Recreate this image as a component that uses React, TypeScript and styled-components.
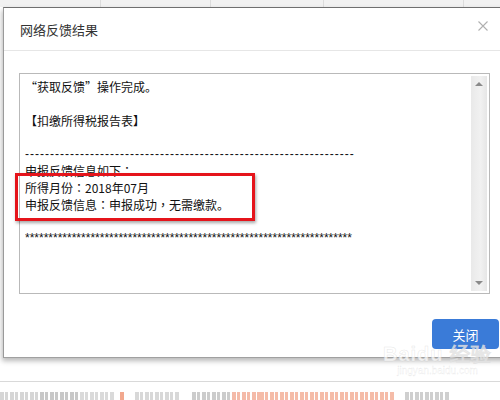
import React from "react";
import styled, { createGlobalStyle } from "styled-components";

const Global = createGlobalStyle`
  html, body { margin: 0; padding: 0; background: #fff; }
  body { width: 500px; height: 400px; overflow: hidden; font-family: "Noto Sans CJK SC", "Noto Sans", sans-serif; }
`;

const Page = styled.div`
  position: relative;
  width: 500px;
  height: 400px;
  overflow: hidden;
  display: flex;
  flex-direction: column;
`;

const TopStrip = styled.div`
  height: 7px;
  background: #f1f1f1;
  display: flex;
`;

const StripCell = styled.div<{ $w: number }>`
  width: ${(p) => p.$w}px;
  border-right: 1px solid #dcdcdc;
  box-sizing: border-box;
`;

const Dialog = styled.div`
  margin-left: 3px;
  width: 530px;
  height: 351px;
  box-sizing: border-box;
  background: #fff;
  border-top: 1px solid #6f6f6f;
  border-left: 1px solid #9a9a9a;
  border-bottom: 1px solid #a0a0a0;
  box-shadow: -1px 3px 5px rgba(0, 0, 0, 0.28);
  display: flex;
  flex-direction: column;
`;

const Header = styled.div`
  height: 43px;
  border-bottom: 1px solid #e6e6e6;
  display: flex;
  align-items: center;
  padding: 0 0 0 16px;
  width: 496px;
  box-sizing: border-box;
  justify-content: space-between;
`;

const Title = styled.div`
  font-size: 13px;
  color: #333;
  margin-top: 1px;
`;

const Close = styled.div`
  width: 10px;
  height: 10px;
  margin-right: 12px;
  margin-top: -6px;
  display: flex;
`;

const Body = styled.div`
  padding: 22px 0 0 15px;
`;

const TextBox = styled.div`
  position: relative;
  width: 471px;
  height: 221px;
  box-sizing: border-box;
  border: 1px solid #b9b9b9;
  display: flex;
`;

const Content = styled.div`
  flex: 1;
  padding: 5px 0 0 5px;
  font-size: 12px;
  line-height: 16.8px;
  color: #111;
  white-space: pre;
`;

const Line = styled.div`
  height: 16.8px;
`;

const Punct = styled.span`
  font-family: "Noto Sans CJK TC", "Noto Sans CJK SC", sans-serif;
`;

const Rule = styled.div<{ $sp: number }>`
  height: 16.8px;
  letter-spacing: ${(p) => p.$sp}px;
  font-family: "Liberation Sans", sans-serif;
  overflow: hidden;
  width: 329px;
`;

const ScrollBar = styled.div`
  width: 16px;
  margin: 2px 2px 2px 0;
  background: linear-gradient(to right, #e9e9e9, #f1f1f1 60%, #e6e6e6);
  display: flex;
  flex-direction: column;
  justify-content: space-between;
  align-items: center;
  padding: 6px 0;
  box-sizing: border-box;
`;

const Arrow = styled.div<{ $down?: boolean }>`
  width: 0;
  height: 0;
  border-left: 4px solid transparent;
  border-right: 4px solid transparent;
  ${(p) =>
    p.$down
      ? "border-top: 4px solid #8a8a8a;"
      : "border-bottom: 4px solid #8a8a8a;"}
`;

const Highlight = styled.div`
  position: absolute;
  left: -5px;
  top: 99px;
  width: 240px;
  height: 48px;
  box-sizing: border-box;
  border: 3px solid #e5141b;
  box-shadow: 1px 2px 3px rgba(0, 0, 0, 0.35);
`;

const Footer = styled.div`
  display: flex;
  padding: 25px 0 0 428px;
`;

const Button = styled.div`
  width: 67px;
  height: 30px;
  border-radius: 4px;
  background: #3a7bd8;
  color: #fff;
  font-size: 13px;
  display: flex;
  align-items: center;
  justify-content: center;
`;

const Below = styled.div`
  flex: 1;
  display: flex;
  flex-direction: column;
  padding-top: 23px;
`;

const Divider = styled.div`
  height: 1px;
  background: #d9d9d9;
`;

const Mosaic = styled.div`
  display: flex;
  margin-top: 10px;
  height: 8px;
  filter: blur(0.5px);
`;

const Block = styled.div<{ $w: number; $c: string; $ml?: number }>`
  width: ${(p) => p.$w}px;
  margin-left: ${(p) => p.$ml ?? 0}px;
  background: repeating-linear-gradient(
    to right,
    ${(p) => p.$c} 0 4px,
    #fff 4px 5px,
    ${(p) => p.$c} 5px 8px,
    rgba(255, 255, 255, 0.5) 8px 10px
  );
`;

const Watermark = styled.div`
  position: absolute;
  left: 383px;
  top: 343px;
  color: rgba(255, 255, 255, 0.7);
  -webkit-text-stroke: 0.5px rgba(200, 200, 200, 0.45);
  font-family: "Liberation Sans", sans-serif;
  display: flex;
  flex-direction: column;
  align-items: center;
`;

const WmTop = styled.div`
  font-size: 20px;
  font-weight: bold;
  line-height: 22px;
  letter-spacing: 1px;
`;

const WmBottom = styled.div`
  font-size: 10px;
  line-height: 12px;
  -webkit-text-stroke: 0.3px rgba(200, 200, 200, 0.45);
`;

export default function App() {
  return (
    <Page>
      <Global />
      <TopStrip>
        <StripCell $w={101} />
        <StripCell $w={110} />
        <StripCell $w={113} />
        <StripCell $w={140} />
      </TopStrip>
      <Dialog>
        <Header>
          <Title>网络反馈结果</Title>
          <Close>
            <svg width="10" height="10" viewBox="0 0 10 10">
              <path d="M0.5 0.5 L9.5 9.5 M9.5 0.5 L0.5 9.5" stroke="#b0b0b0" strokeWidth="1.1" fill="none" />
            </svg>
          </Close>
        </Header>
        <Body>
          <TextBox>
            <Content>
              <Line>“获取反馈”操作完成。</Line>
              <Line> </Line>
              <Line>【扣缴所得税报告表】</Line>
              <Line> </Line>
              <Rule $sp={1}>{"-".repeat(66)}</Rule>
              <Line>申报反馈信息如下<Punct>：</Punct></Line>
              <Line>所得月份<Punct>：</Punct>2018年07月</Line>
              <Line>申报反馈信息<Punct>：</Punct>申报成功<Punct>，</Punct>无需缴款。</Line>
              <Line> </Line>
              <Rule $sp={0}>{"*".repeat(70)}</Rule>
            </Content>
            <ScrollBar>
              <Arrow />
              <Arrow $down />
            </ScrollBar>
            <Highlight />
          </TextBox>
        </Body>
        <Footer>
          <Button>关闭</Button>
        </Footer>
      </Dialog>
      <Below>
        <Divider />
        <Mosaic>
          <Block $w={40} $c="#d6d6d6" />
          <Block $w={40} $c="#c8c8c8" />
          <Block $w={35} $c="#dadada" />
          <Block $w={5} $c="#f2a88e" $ml={5} />
          <Block $w={45} $c="#d8d8d8" $ml={10} />
          <Block $w={40} $c="#cccccc" $ml={12} />
          <Block $w={28} $c="#f4baa8" />
          <Block $w={135} $c="#f5bca8" />
          <Block $w={45} $c="#cfcfcf" $ml={10} />
        </Mosaic>
      </Below>
      <Watermark>
        <WmTop>Baidu 经验</WmTop>
        <WmBottom>jingyan.baidu.com</WmBottom>
      </Watermark>
    </Page>
  );
}
